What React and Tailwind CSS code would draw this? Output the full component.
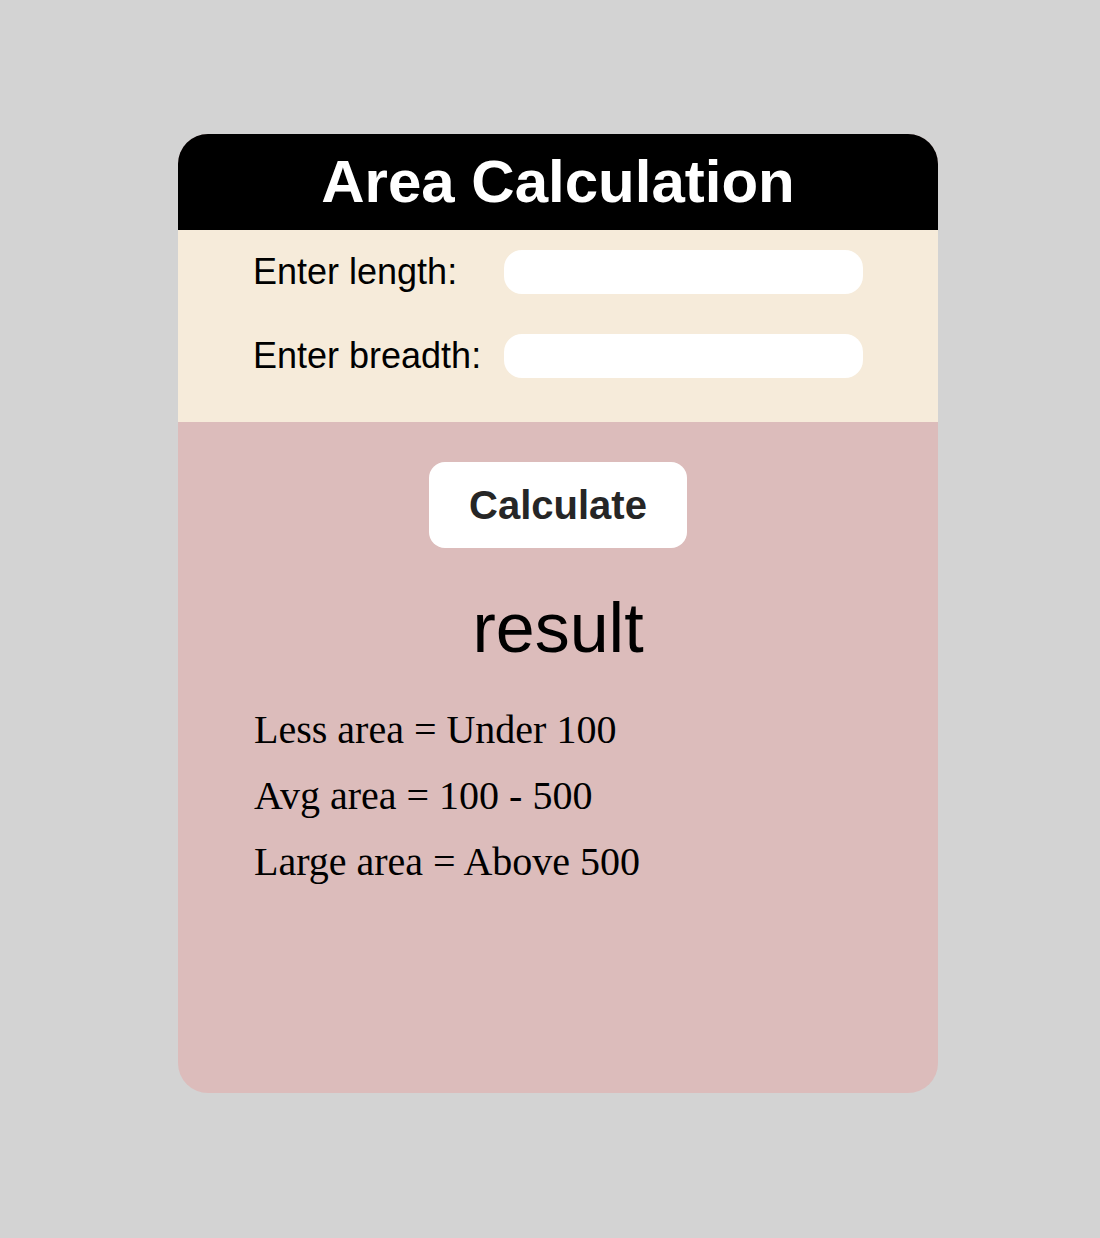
export default function App() {
  return (
    <div className="min-h-[1238px] w-full bg-[#d3d3d3] pt-[134px]" style={{ fontFamily: '"Liberation Sans", Arial, sans-serif' }}>
      <div className="ml-[178px] flex h-[959px] w-[760px] flex-col overflow-hidden rounded-[30px] bg-[#dcbcbb]">
        {/* header */}
        <div className="flex h-[96px] items-center justify-center bg-black">
          <h1 className="text-[60px] font-bold text-white">Area Calculation</h1>
        </div>

        {/* inputs */}
        <div className="flex h-[192px] flex-col gap-[40px] bg-[#f6ebda] px-[75px] pt-[20px]">
          <div className="flex h-[44px] items-center">
            <label className="w-[251px] text-[36px] leading-[44px] text-black">Enter length:</label>
            <input type="text" className="block h-[44px] w-[360px] rounded-[18px] bg-white p-0 outline-none" />
          </div>
          <div className="flex h-[44px] items-center">
            <label className="w-[251px] text-[36px] leading-[44px] text-black">Enter breadth:</label>
            <input type="text" className="block h-[44px] w-[360px] rounded-[18px] bg-white p-0 outline-none" />
          </div>
        </div>

        {/* result area */}
        <div className="flex flex-1 flex-col pt-[40px]">
          <div className="flex justify-center">
            <button className="h-[86px] w-[258px] rounded-[16px] bg-white text-[40px] font-bold text-[#262626]">
              Calculate
            </button>
          </div>
          <div className="mt-[40px] text-center text-[70px] leading-[80px] text-black">result</div>
          <div
            className="mt-[39px] flex flex-col gap-[20px] pl-[76px] text-[40px] leading-[46px] text-black"
            style={{ fontFamily: '"Liberation Serif", "Times New Roman", serif' }}
          >
            <p>Less area = Under 100</p>
            <p>Avg area = 100 - 500</p>
            <p>Large area = Above 500</p>
          </div>
        </div>
      </div>
    </div>
  );
}
